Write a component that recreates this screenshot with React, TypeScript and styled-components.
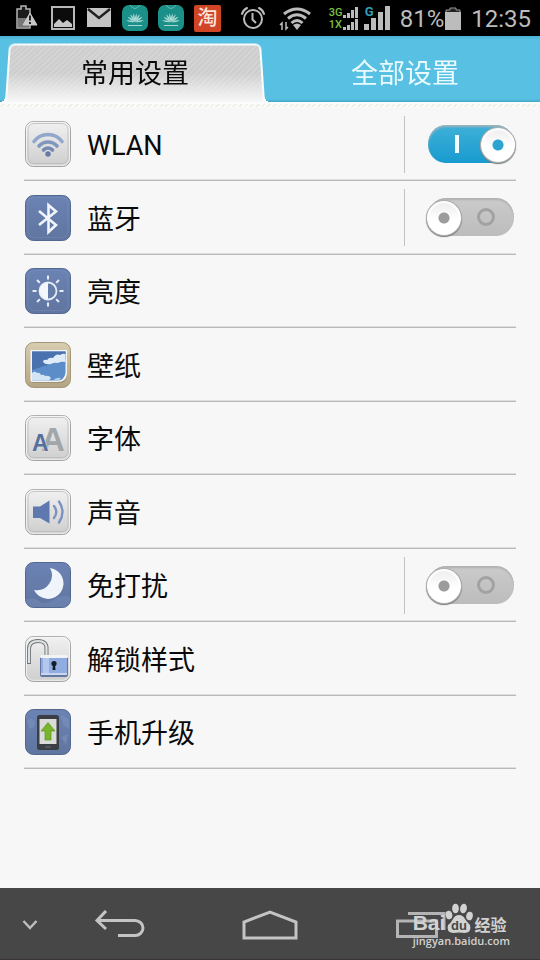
import React, { useId, useState } from "react";
import styled, { createGlobalStyle } from "styled-components";

const GlobalStyle = createGlobalStyle`
  *, *::before, *::after { box-sizing: border-box; }
  body { margin: 0; background: #f7f7f7; }
  button { font: inherit; color: inherit; border: 0; padding: 0; background: none; cursor: pointer; }
  svg { display: block; flex: none; }
`;

const Screen = styled.div`
  min-height: 100vh;
  display: flex;
  flex-direction: column;
  background: #f7f7f7;
  color: #0a0a0a;
  font-family: Roboto, "Noto Sans CJK SC", sans-serif;
`;

/* ---------- status bar ---------- */

const StatusBar = styled.header`
  display: flex;
  align-items: center;
  justify-content: space-between;
  height: 36px;
  padding: 0 9px 0 16px;
  background: #000;
  color: #bcbcbc;
  font-size: 24px;
  line-height: 36px;
`;

const StatusGroup = styled.div`
  display: flex;
  align-items: center;
  gap: 10px;
`;

const Reading = styled.span`
  padding-top: 2px;
`;

const Tight = styled.div<{ $gap: number }>`
  display: flex;
  align-items: center;
  gap: ${(p) => p.$gap}px;
`;

const Taobao = styled.span`
  width: 27px;
  height: 27px;
  border-radius: 2px;
  background: #cf4526;
  color: #fbe3dc;
  font-size: 20px;
  font-weight: 500;
  line-height: 27px;
  text-align: center;
`;

const NetRows = styled.div`
  display: grid;
  gap: 1px;
`;

const NetRow = styled.div`
  display: flex;
  align-items: flex-end;
  gap: 1px;
  height: 11px;
  color: #7cc142;
  font-size: 11px;
  font-weight: 500;
  line-height: 11px;
`;

const NetName = styled.span`
  width: 13px;
`;

const SignalBox = styled.div`
  position: relative;
`;

const SignalTag = styled.span`
  position: absolute;
  left: 1px;
  top: -1px;
  color: #2fa0b4;
  font-size: 13px;
  font-weight: 700;
  line-height: 13px;
`;

const MiniBars = () => (
  <svg width="15" height="11" fill="#bcbcbc" aria-hidden>
    <rect x="0" y="8" width="3" height="3" />
    <rect x="4" y="6" width="3" height="5" />
    <rect x="8" y="3" width="3" height="8" />
    <rect x="12" y="0" width="3" height="11" />
  </svg>
);

const HuaweiIcon = () => (
  <svg width="26" height="26" viewBox="0 0 26 26" aria-hidden>
    <rect width="26" height="26" rx="7" fill="#1a9088" />
    <path d="M8 0Q13 7 18 0" fill="none" stroke="#6fbcb5" />
    <g fill="#a9d9d4">
      {[-80, -55, -32, -11, 11, 32, 55, 80].map((a) => (
        <path key={a} d="M13 17Q11.300 12 13 8Q14.700 12 13 17Z" transform={`rotate(${a} 13 17)`} />
      ))}
      <rect x="6" y="20" width="14" height="1" />
    </g>
  </svg>
);

const Status = () => (
  <StatusBar>
    <StatusGroup>
      <svg width="24" height="26" viewBox="0 0 24 26" aria-hidden>
        <path d="M1 4H5V1H10V4H14V23H1Z" fill="#1c1c1c" stroke="#b4b4b4" strokeWidth="1.500" />
        <path d="M2 13H13V22H2Z" fill="#777" />
        <path d="M14 8L21 20H7Z" fill="#c8c8c8" stroke="#c8c8c8" strokeLinejoin="round" />
        <path d="M14 10.500V15.500M14 17V19" stroke="#222" strokeWidth="2" />
      </svg>
      <svg width="26" height="26" viewBox="0 0 26 26" aria-hidden>
        <rect x="2" y="2" width="22" height="22" fill="#0c0c0c" stroke="#b8b8b8" strokeWidth="2" />
        <path d="M4 22V19L9 14L13 18L17 15L22 19V22Z" fill="#c6c6c6" />
      </svg>
      <svg width="26" height="26" viewBox="0 0 26 26" aria-hidden>
        <rect x="1" y="3" width="24" height="19" fill="#c4c4c4" />
        <path d="M2 4L13 13L24 4" fill="none" stroke="#222" strokeWidth="2.500" />
      </svg>
      <HuaweiIcon />
      <HuaweiIcon />
      <Taobao>淘</Taobao>
    </StatusGroup>
    <StatusGroup>
      <svg width="27" height="26" viewBox="0 0 27 26" fill="none" stroke="#bcbcbc" strokeWidth="2" aria-hidden>
        <circle cx="13" cy="14" r="9" />
        <path d="M12.500 8V14.500L16 18" />
        <path d="M2 9Q3 5 7 3M19 3Q23 5 24 9" strokeLinecap="round" />
      </svg>
      <svg width="42" height="26" viewBox="0 0 42 26" aria-hidden>
        <g fill="none" stroke="#bcbcbc" strokeWidth="3">
          <path d="M7 9Q20 -1 33 9" />
          <path d="M11 13.500Q20 6 29 13.500" />
          <path d="M14.500 18Q20 13 25.500 18" />
        </g>
        <path d="M16 20Q20 17 24 20L20 25Z" fill="#bcbcbc" />
        <path d="M5 25V18L3 20M9 17V24L11 22" fill="none" stroke="#bcbcbc" strokeWidth="1.500" />
      </svg>
      <Tight $gap={6}>
        <NetRows>
          <NetRow><NetName>3G</NetName><MiniBars /></NetRow>
          <NetRow><NetName>1X</NetName><MiniBars /></NetRow>
        </NetRows>
        <SignalBox>
          <svg width="26" height="24" fill="#bcbcbc" aria-hidden>
            <rect x="0" y="18" width="5" height="6" />
            <rect x="7" y="12" width="5" height="12" />
            <rect x="14" y="6" width="5" height="18" />
            <rect x="21" y="0" width="5" height="24" />
          </svg>
          <SignalTag>G</SignalTag>
        </SignalBox>
      </Tight>
      <Tight $gap={1}>
        <Reading>81%</Reading>
        <svg width="16" height="23" viewBox="0 0 16 23" aria-hidden>
          <path d="M1 3H5V1H11V3H15V6H1Z" fill="#222" stroke="#999" />
          <rect y="5" width="16" height="18" fill="#bcbcbc" />
        </svg>
      </Tight>
      <Reading>12:35</Reading>
    </StatusGroup>
  </StatusBar>
);

/* ---------- tabs ---------- */

const Tabs = styled.nav`
  display: grid;
  grid-template-columns: 1fr 1fr;
  height: 66px;
  background: linear-gradient(#49b1d4, #58c0e2 4px, #58c0e2 63px, #45a7c6);
`;

const Tab = styled.button<{ $active: boolean }>`
  position: relative;
  isolation: isolate;
  padding-top: 10px;
  font-size: 27px;
  line-height: 36px;
  color: ${(p) => (p.$active ? "#0a0a0a" : "#e9fbff")};

  &::before {
    content: "";
    display: ${(p) => (p.$active ? "block" : "none")};
    position: absolute;
    z-index: -1;
    inset: 5px 5px 0 5px;
    border: 2px solid #f7fdfe;
    border-bottom: 0;
    border-radius: 6px 6px 0 0;
    background:
      linear-gradient(rgba(247, 247, 247, 0) 50%, #f7f7f7),
      repeating-linear-gradient(135deg, #cdcdcd 0 2px, #d5d5d5 2px 4px);
    transform: perspective(300px) rotateX(9deg);
    transform-origin: bottom;
  }

  &::after {
    content: "";
    display: ${(p) => (p.$active ? "block" : "none")};
    position: absolute;
    z-index: -2;
    inset: auto 0 0 0;
    height: 5px;
    background:
      radial-gradient(circle at 0 0, transparent 5px, #f7f7f7 5px) left / 6px 5px no-repeat,
      radial-gradient(circle at 100% 0, transparent 5px, #f7f7f7 5px) right / 7px 5px no-repeat;
  }
`;

const Stitch = styled.div`
  height: 6px;
  background: repeating-linear-gradient(135deg, #fbfbfa 0 2px, #f0efe9 2px 4px);
  border-top: 2px solid #fbfdfd;
  border-bottom: 1px solid #fafafa;
`;

/* ---------- list ---------- */

const List = styled.ul`
  flex: 1;
  margin: 0;
  padding: 0 24px;
  list-style: none;
`;

const Row = styled.li`
  display: flex;
  align-items: center;
  height: 73px;
  border-bottom: 1px solid #b9b9b9;
  box-shadow: 0 -1px 0 #dedede inset;

  &:nth-child(even) {
    height: 74px;
  }
`;

const RowLabel = styled.label`
  flex: 1;
  display: flex;
  align-items: center;
  gap: 16px;
  padding-left: 1px;
  font-size: 27px;
  line-height: 40px;
  text-align: left;
  cursor: pointer;
`;

const RowName = styled.span`
  padding-top: 4px;
`;

const SwitchCell = styled.div`
  display: flex;
  align-items: center;
  height: 57px;
  padding-left: 21px;
  border-left: 1px solid #c2c2c2;
`;

const Switch = styled.input.attrs({ type: "checkbox", role: "switch" })`
  appearance: none;
  position: relative;
  width: 90px;
  height: 39px;
  margin: 0;
  border-radius: 20px;
  border: 1px solid transparent;
  border-width: 0 2px 1px 2px;
  background: linear-gradient(#cbcbcb, #bcbcbc) padding-box;
  box-shadow: inset 0 2px 2px #b0b0b0;
  cursor: pointer;

  &::before {
    content: "";
    position: absolute;
    left: -1px;
    top: 3px;
    width: 34px;
    height: 34px;
    border-radius: 50%;
    background:
      radial-gradient(circle, #9c9c9c 5px, transparent 6px),
      linear-gradient(#ececec, #fff 55%);
    box-shadow: 0 0 0 1px #b0b0b0, 0 1px 1px 1px #777, inset 0 0 2px 2px #fff;
  }

  &::after {
    content: "";
    position: absolute;
    left: 49px;
    top: 10px;
    width: 18px;
    height: 18px;
    border: 3px solid #a2a2a2;
    border-radius: 50%;
  }

  &:checked {
    background: linear-gradient(#3fb0d8, #189bcf) padding-box;
    box-shadow: inset 0 2px 2px #9fb4bc;
  }

  &:checked::before {
    left: 53px;
    background:
      radial-gradient(circle, #2ba5d0 5px, transparent 6px),
      linear-gradient(#ececec, #fff 55%);
  }

  &:checked::after {
    left: 27px;
    width: 4px;
    border: 0;
    border-radius: 0;
    background: #f4fcff;
  }
`;

/* ---------- list icons ---------- */

type Tone = "light" | "blue" | "tan";
const tones: Record<Tone, [string, string, string]> = {
  light: ["#f1f1f1", "#cdcecd", "#a3a5a5"],
  blue: ["#6b83b4", "#60759f", "#53688f"],
  tan: ["#d8cdb0", "#b3a484", "#a49778"],
};

const Tile = ({ tone, ring = true, children }: { tone: Tone; ring?: boolean; children: React.ReactNode }) => {
  const id = useId();
  const [top, bottom, edge] = tones[tone];
  return (
    <svg width="46" height="46" viewBox="0 0 46 46" aria-hidden>
      <defs>
        <linearGradient id={id} x1="0" y1="0" x2="0" y2="1">
          <stop offset="0" stopColor={top} />
          <stop offset="1" stopColor={bottom} />
        </linearGradient>
      </defs>
      <rect x="0.500" y="0.500" width="45" height="45" rx="8" fill={`url(#${id})`} stroke={edge} />
      {ring && (
        <rect x="3" y="2.500" width="40" height="40" rx="6" fill="none" stroke={tone === "light" ? "#b9bbbb" : "#8398c0"} strokeOpacity={tone === "light" ? 0.8 : 0.3} />
      )}
      {tone === "light" && <rect x="1.500" y="1.300" width="43" height="43" rx="7" fill="none" stroke="#fafafa" strokeOpacity="0.700" />}
      {children}
    </svg>
  );
};

const WifiTile = () => (
  <Tile tone="light">
    <g fill="none" strokeWidth="3.600" strokeLinecap="round">
      <path d="M9 20.500A17.500 17.500 0 0 1 37 20.500" stroke="#91a7cb" />
      <path d="M14 25A12 12 0 0 1 32 25" stroke="#8096bd" />
      <path d="M18.500 29A6 6 0 0 1 27.500 29" stroke="#7389b1" />
    </g>
    <circle cx="23" cy="33" r="2.700" fill="#627aa5" />
  </Tile>
);

const BluetoothTile = () => (
  <Tile tone="blue">
    <path d="M14 16L31 30L23.500 37V10L31 16.500L14 30" fill="none" stroke="#f1f5fb" strokeWidth="2.600" />
  </Tile>
);

const BrightnessTile = () => (
  <Tile tone="blue">
    <circle cx="23" cy="23" r="8.500" fill="#667da9" stroke="#e5ecf6" strokeWidth="1.800" />
    <path d="M23 14.500A8.500 8.500 0 0 0 23 31.500Z" fill="#f3f7fc" />
    {[0, 45, 90, 135, 180, 225, 270, 315].map((a) => (
      <path key={a} d="M23 7.500V11.500" stroke="#e8eef8" strokeWidth="2" transform={`rotate(${a} 23 23)`} />
    ))}
  </Tile>
);

const WallpaperTile = () => (
  <Tile tone="tan" ring={false}>
    <path d="M6 9H42V34Q41 41 35 41H8Q6 41 6 39Z" fill="#8c8065" opacity="0.600" />
    <path d="M5.500 8H42V32Q41 40 33 40H7Q5.500 40 5.500 38Z" fill="#f4f5f2" />
    <path d="M7 9.500H40.500V31Q39 38.500 33 38.500H7Z" fill="#5c8dc8" />
    <path d="M7 9.500H40.500V17L7 28Z" fill="#4972ae" />
    <path d="M18 20Q18 17 22 18Q24 15 28 16Q31 11 35 13Q38 11 40.500 12V20Q36 19 33 21Q29 20 26 22Q20 23 18 20Z" fill="#dfecf7" />
    <path d="M7 31Q10 28 12 31Q15 30 16 33Q19 32 20 34Q24 33 26 36L24 38.500H7Z" fill="#d3e5f4" />
    <path d="M28 38.500Q31 35 36 36Q34 38.500 32 38.500Z" fill="#b5d2ea" />
  </Tile>
);

const FontTile = () => (
  <Tile tone="light">
    <g fontFamily="'Liberation Sans', sans-serif" fontWeight="700">
      <text x="16" y="36" fontSize="33" fill="#a2a6a9">A</text>
      <text x="7" y="36" fontSize="23" fill="#566f9f" stroke="#dde0e4" strokeWidth="1" paintOrder="stroke">A</text>
    </g>
  </Tile>
);

const SoundTile = () => (
  <Tile tone="light">
    <path d="M8 17.500H15L24.500 11.500V34.500L15 29H8Z" fill="#5f79b0" />
    <g fill="none" stroke="#7a90bf" strokeWidth="2.300" strokeLinecap="round">
      <path d="M29 17Q33.500 23 29 29" />
      <path d="M34 12.500Q41 23 34 33.500" />
    </g>
  </Tile>
);

const MoonTile = () => (
  <Tile tone="blue" ring={false}>
    <path d="M1 38Q8 34 14 39T28 38T45 35V39Q45 45 38 45H8Q1 45 1 38Z" fill="#7b92c0" opacity="0.400" />
    <path d="M25 6A15.500 15.500 0 1 1 9 28A15 15 0 0 0 25 6Z" fill="#f0f5fc" />
  </Tile>
);

const UnlockTile = () => (
  <Tile tone="light" ring={false}>
    <path d="M4 28V13Q4 5 13 5T21.500 13V20" fill="none" stroke="#6f7478" strokeWidth="4" />
    <path d="M4 27V13Q4 5 13 5T21.500 13V20" fill="none" stroke="#dfe2e3" strokeWidth="2.200" />
    <rect x="15" y="19" width="28" height="22" rx="2" fill="#6478a2" />
    <rect x="16" y="21" width="26" height="16" fill="#91ace0" />
    <rect x="18" y="21" width="6" height="16" fill="#b4c8ee" />
    <rect x="15" y="19" width="28" height="3" rx="1" fill="#f1f3f5" />
    <rect x="16" y="37" width="26" height="2" fill="#c8d6ee" />
    <circle cx="29" cy="27.500" r="2.600" fill="#151c28" />
    <path d="M28 28H30L30.500 34H27.500Z" fill="#151c28" />
  </Tile>
);

const UpgradeTile = () => (
  <Tile tone="blue" ring={false}>
    <path d="M2 12Q6 8 10 12L9 18L5 20ZM36 6L44 10V20L38 16ZM36 28L43 25L41 36Z" fill="#869bc3" opacity="0.400" />
    <rect x="12" y="6" width="22" height="35" rx="2.500" fill="#3b3f45" />
    <rect x="14.500" y="10" width="17" height="25" fill="#d9dcd8" />
    <path d="M23 13.500L30 22H26V31H20V22H16Z" fill="#79b52c" stroke="#5a9420" strokeWidth="0.700" />
    <rect x="20" y="37.500" width="6" height="1" fill="#6f747b" />
  </Tile>
);

type Item = { id: string; name: string; Icon: React.FC; toggle?: boolean };
const items: Item[] = [
  { id: "wlan", name: "WLAN", Icon: WifiTile, toggle: true },
  { id: "bluetooth", name: "蓝牙", Icon: BluetoothTile, toggle: true },
  { id: "brightness", name: "亮度", Icon: BrightnessTile },
  { id: "wallpaper", name: "壁纸", Icon: WallpaperTile },
  { id: "font", name: "字体", Icon: FontTile },
  { id: "sound", name: "声音", Icon: SoundTile },
  { id: "dnd", name: "免打扰", Icon: MoonTile, toggle: true },
  { id: "unlock", name: "解锁样式", Icon: UnlockTile },
  { id: "upgrade", name: "手机升级", Icon: UpgradeTile },
];

/* ---------- navigation bar ---------- */

const NavBar = styled.footer`
  position: relative;
  display: grid;
  grid-template-columns: 1fr 2fr 3fr 2fr 1fr;
  height: 72px;
  background: #474747;
  border-bottom: 1px solid #3a3338;
`;

const NavButton = styled.button`
  display: grid;
  place-items: center;
  padding-top: 3px;
`;

const Watermark = styled.div`
  position: absolute;
  right: 30px;
  top: 14px;
  color: #d2d2d2;
  pointer-events: none;
`;

const Brand = styled.div`
  display: flex;
  align-items: flex-end;
  height: 32px;
  font-family: "Liberation Sans", "Noto Sans CJK SC", sans-serif;
  font-weight: 700;
  font-size: 21px;
  line-height: 22px;
`;

const BrandCjk = styled.span`
  margin-left: 1px;
  font-family: "Noto Sans CJK SC", sans-serif;
  font-size: 16px;
  line-height: 20px;
`;

const Site = styled.div`
  font-family: "Open Sans", sans-serif;
  font-size: 11px;
  font-weight: 600;
  line-height: 14px;
`;

export default function App() {
  const [tab, setTab] = useState(0);
  const [on, setOn] = useState<Record<string, boolean>>({ wlan: true });

  return (
    <>
      <GlobalStyle />
      <Screen>
        <Status />
        <Tabs>
          {["常用设置", "全部设置"].map((name, i) => (
            <Tab key={name} type="button" $active={tab === i} aria-pressed={tab === i} onClick={() => setTab(i)}>
              {name}
            </Tab>
          ))}
        </Tabs>
        <Stitch />
        <List>
          {items.map(({ id, name, Icon, toggle }) => (
            <Row key={id}>
              {toggle ? (
                <>
                  <RowLabel htmlFor={id}>
                    <Icon />
                    <RowName>{name}</RowName>
                  </RowLabel>
                  <SwitchCell>
                    <Switch id={id} checked={!!on[id]} onChange={(e) => setOn({ ...on, [id]: e.target.checked })} />
                  </SwitchCell>
                </>
              ) : (
                <RowLabel as="button">
                  <Icon />
                  <RowName>{name}</RowName>
                </RowLabel>
              )}
            </Row>
          ))}
        </List>
        <NavBar>
          <NavButton type="button" aria-label="收起">
            <svg width="16" height="12" viewBox="0 0 16 12" fill="none" stroke="#bdbdbd" strokeWidth="2.500">
              <path d="M1.500 2L8 9L14.500 2" />
            </svg>
          </NavButton>
          <NavButton type="button" aria-label="返回">
            <svg width="52" height="30" viewBox="0 0 52 30" fill="none" stroke="#c4c4c4" strokeWidth="3">
              <path d="M12 1L3 10.500L12 19M3 10.500H41A8 7.500 0 0 1 41 25.500H24" />
            </svg>
          </NavButton>
          <NavButton type="button" aria-label="主页">
            <svg width="56" height="32" viewBox="0 0 56 32" fill="none" stroke="#c4c4c4" strokeWidth="3">
              <path d="M2 29V13L28 3L54 13V29Z" />
            </svg>
          </NavButton>
          <NavButton type="button" aria-label="最近任务">
            <svg width="52" height="30" viewBox="0 0 52 30" fill="none" stroke="#b4b4b4" strokeWidth="3">
              <path d="M3.500 11H42.500V26.500H3.500ZM14 3.500H50V20" />
            </svg>
          </NavButton>
          <Watermark>
            <Brand>
              Bai
              <svg width="28" height="31" viewBox="0 0 28 31" fill="#d2d2d2" aria-hidden>
                <ellipse cx="4" cy="12" rx="3.300" ry="4.300" transform="rotate(-12 4 12)" />
                <ellipse cx="10.500" cy="5.500" rx="3.400" ry="4.800" />
                <ellipse cx="18.500" cy="5.500" rx="3.400" ry="4.800" transform="rotate(10 18.500 5.500)" />
                <ellipse cx="24.500" cy="13" rx="3.300" ry="4.300" transform="rotate(12 24.500 13)" />
                <path d="M14 12Q18 12 20 16Q22 19 25 22Q27 29 20 30Q14 29 8 30Q1 29 3 22Q6 20 8 16Q10 12 14 12Z" />
                <text x="14" y="27" textAnchor="middle" fontSize="13" fontWeight="700" fontFamily="Liberation Sans, sans-serif" fill="#474747">du</text>
              </svg>
              <BrandCjk>经验</BrandCjk>
            </Brand>
            <Site>jingyan.baidu.com</Site>
          </Watermark>
        </NavBar>
      </Screen>
    </>
  );
}
